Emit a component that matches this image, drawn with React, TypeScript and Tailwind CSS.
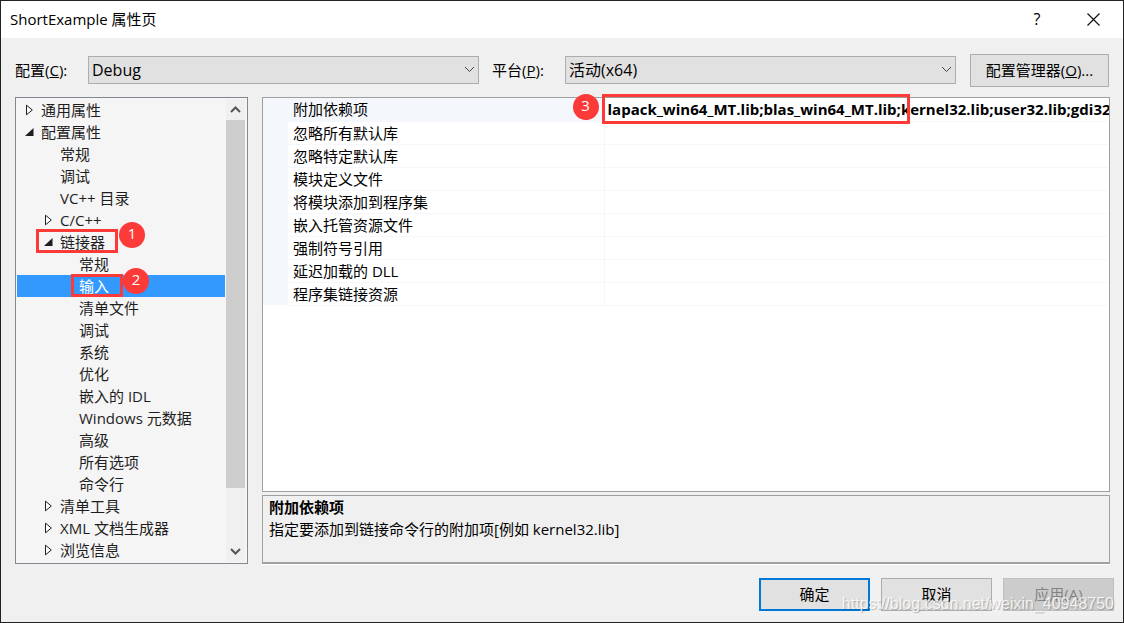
import { useState } from 'react';
import type { ReactNode } from 'react';
import clsx from 'clsx';

type TreeItem = {
  id: string;
  label: string;
  level: 0 | 1 | 2;
  open?: boolean;
};

const TREE: TreeItem[] = [
  { id: 'common', label: '通用属性', level: 0, open: false },
  { id: 'config', label: '配置属性', level: 0, open: true },
  { id: 'general', label: '常规', level: 1 },
  { id: 'debugging', label: '调试', level: 1 },
  { id: 'vc-dirs', label: 'VC++ 目录', level: 1 },
  { id: 'cpp', label: 'C/C++', level: 1, open: false },
  { id: 'linker', label: '链接器', level: 1, open: true },
  { id: 'linker-general', label: '常规', level: 2 },
  { id: 'linker-input', label: '输入', level: 2 },
  { id: 'linker-manifest', label: '清单文件', level: 2 },
  { id: 'linker-debug', label: '调试', level: 2 },
  { id: 'linker-system', label: '系统', level: 2 },
  { id: 'linker-optimize', label: '优化', level: 2 },
  { id: 'linker-idl', label: '嵌入的 IDL', level: 2 },
  { id: 'linker-winmd', label: 'Windows 元数据', level: 2 },
  { id: 'linker-advanced', label: '高级', level: 2 },
  { id: 'linker-all', label: '所有选项', level: 2 },
  { id: 'linker-cmd', label: '命令行', level: 2 },
  { id: 'manifest-tool', label: '清单工具', level: 1, open: false },
  { id: 'xml-doc', label: 'XML 文档生成器', level: 1, open: false },
  { id: 'browse-info', label: '浏览信息', level: 1, open: false },
];

const INDENT = ['pl-2', 'pl-[27px]', 'pl-[46px]'];

const PROPERTIES = [
  { name: '附加依赖项', value: 'lapack_win64_MT.lib;blas_win64_MT.lib;kernel32.lib;user32.lib;gdi32' },
  { name: '忽略所有默认库', value: '' },
  { name: '忽略特定默认库', value: '' },
  { name: '模块定义文件', value: '' },
  { name: '将模块添加到程序集', value: '' },
  { name: '嵌入托管资源文件', value: '' },
  { name: '强制符号引用', value: '' },
  { name: '延迟加载的 DLL', value: '' },
  { name: '程序集链接资源', value: '' },
];

function Expander({ open }: { open?: boolean }) {
  return (
    <svg width="9" height="12" viewBox="0 0 9 12" className="shrink-0" aria-hidden="true">
      {open === true && <path d="M8.5 2v8H0z" fill="#1e1e1e" />}
      {open === false && <path d="M1.5 1.2v9.6L7.3 6z" fill="#fff" stroke="#1e1e1e" />}
    </svg>
  );
}

function Chevron({ up = false, bold = false }: { up?: boolean; bold?: boolean }) {
  return (
    <svg width="11" height="7" viewBox="0 0 11 7" fill="none" aria-hidden="true">
      <path
        d={up ? 'M1 6 5.5 1.5 10 6' : 'M1 1 5.5 5.5 10 1'}
        stroke={bold ? '#555' : '#444'}
        strokeWidth={bold ? 2 : 1}
      />
    </svg>
  );
}

/** Red numbered callout, placed over the dialog by its parent. */
function Badge({ n, className }: { n: number; className: string }) {
  return (
    <span
      className={clsx(
        'pointer-events-none absolute z-10 grid size-[26px] place-items-center rounded-full bg-[#fc3a38] pb-1 text-[15px] font-normal text-white',
        className,
      )}
    >
      {n}
    </span>
  );
}

function Outline({ className }: { className: string }) {
  return <span className={clsx('pointer-events-none absolute z-10 border-3 border-[#fc3a38]', className)} />;
}

function Combo({ id, label, options }: { id: string; label: ReactNode; options: string[] }) {
  return (
    <div className="flex flex-1 items-center">
      <label htmlFor={id} className="w-[73px] shrink-0 whitespace-nowrap">
        {label}
      </label>
      <div className="relative min-w-0 flex-1">
        <select
          id={id}
          className="block h-7 w-full appearance-none border border-[#adadad] bg-[#e1e1e1] pl-[3px] pr-7 text-base leading-5"
        >
          {options.map((o) => (
            <option key={o}>{o}</option>
          ))}
        </select>
        <span className="pointer-events-none absolute inset-y-0 right-1 flex items-center">
          <Chevron />
        </span>
      </div>
    </div>
  );
}

function Tree({ selected, onSelect }: { selected: string; onSelect: (id: string) => void }) {
  return (
    <nav className="flex w-[233px] shrink-0 border border-[#828790] bg-[#f5f5f5] p-px">
      <ul className="min-w-0 flex-1">
        {TREE.map((item) => (
          <li key={item.id} className="relative">
            <button
              type="button"
              onClick={() => onSelect(item.id)}
              className={clsx(
                'flex h-[22px] w-full items-center gap-[7px] whitespace-nowrap text-left',
                INDENT[item.level],
                item.id === selected ? 'bg-[#3399ff] text-white' : 'text-[#1e1e1e]',
              )}
            >
              <Expander open={item.open} />
              {item.label}
            </button>
            {item.id === 'linker' && (
              <>
                <Outline className="-top-0.5 left-[19px] h-6 w-[82px]" />
                <Badge n={1} className="-top-[9px] left-[102px]" />
              </>
            )}
            {item.id === 'linker-input' && (
              <>
                <Outline className="-top-px left-[54px] h-[23px] w-[52px]" />
                <Badge n={2} className="-top-[7px] left-[106px]" />
              </>
            )}
          </li>
        ))}
      </ul>
      <div className="mx-px flex w-[19px] flex-col bg-[#f0f0f0]">
        <button type="button" aria-label="向上滚动" className="grid h-[21px] place-items-center">
          <Chevron up bold />
        </button>
        <div className="flex-1">
          <div className="h-[87.5%] bg-[#cdcdcd]" />
        </div>
        <button type="button" aria-label="向下滚动" className="grid h-[21px] place-items-center">
          <Chevron bold />
        </button>
      </div>
    </nav>
  );
}

function PropertyGrid() {
  return (
    <div className="flex-1 border border-[#a0a0a0] bg-white">
      <table className="w-full table-fixed border-collapse">
        <tbody>
          {PROPERTIES.map((p, i) => (
            <tr key={p.name} className="h-[23px]">
              <td className="w-[25px] bg-[#f4f7fc] p-0" />
              <th
                scope="row"
                className={clsx(
                  'w-[316px] border-b border-r border-[#f4f7fc] p-0 pl-[5px] text-left font-normal',
                  i === 0 && 'bg-[#f4f7fc]',
                )}
              >
                {p.name}
              </th>
              <td className="relative border-b border-[#f4f7fc] p-0 pl-[3px]">
                <div className="overflow-hidden whitespace-nowrap font-bold">{p.value}</div>
                {i === 0 && (
                  <>
                    <Badge n={3} className="-left-8 -top-1" />
                    <Outline className="-left-[3px] -top-1 h-[30px] w-[308px]" />
                  </>
                )}
              </td>
            </tr>
          ))}
        </tbody>
      </table>
    </div>
  );
}

export default function App() {
  const [selected, setSelected] = useState('linker-input');

  return (
    <div className="relative flex min-h-screen flex-col border border-[#222] bg-[#f0f0f0] font-['Open_Sans','Noto_Sans_CJK_SC',sans-serif] text-[15px] leading-[22px] text-black">
      <header className="flex h-[37px] items-center justify-between bg-white pl-[9px] pr-[18px]">
        <h1 className="pb-0.5">ShortExample 属性页</h1>
        <div className="flex items-center gap-9">
          <button type="button" aria-label="帮助" className="w-4 pb-0.5 text-center text-base">
            ?
          </button>
          <button type="button" aria-label="关闭" className="grid size-6 place-items-center">
            <svg width="13" height="13" viewBox="0 0 13 13" stroke="#111" strokeWidth="1.2" aria-hidden="true">
              <path d="M.5.5l12 12M12.5.5l-12 12" />
            </svg>
          </button>
        </div>
      </header>

      <div className="flex items-center gap-3.5 px-3.5 pb-2.5 pt-4">
        <div className="flex flex-1 gap-[13px] pb-0.5">
          <Combo
            id="configuration"
            label={
              <>
                配置(<u>C</u>):
              </>
            }
            options={['Debug']}
          />
          <Combo
            id="platform"
            label={
              <>
                平台(<u>P</u>):
              </>
            }
            options={['活动(x64)']}
          />
        </div>
        <button type="button" className="h-[33px] w-[139px] border border-[#adadad] bg-[#e1e1e1] pb-0.5">
          配置管理器(<u>O</u>)...
        </button>
      </div>

      <main className="flex flex-1 gap-3.5 pl-3.5 pr-[13px]">
        <Tree selected={selected} onSelect={setSelected} />
        <div className="flex min-w-0 flex-1 flex-col gap-[3px]">
          <PropertyGrid />
          <section className="h-[69px] border border-b-2 border-[#a0a0a0] px-1.5 shadow-[0_1px_0_#fff]">
            <h2 className="font-bold">附加依赖项</h2>
            <p>指定要添加到链接命令行的附加项[例如 kernel32.lib]</p>
          </section>
        </div>
      </main>

      <footer className="flex justify-end gap-[11px] pb-[11px] pr-[9px] pt-3.5">
        <button type="button" className="h-[33px] w-[111px] border-2 border-[#0078d7] bg-[#e1e1e1] pb-0.5">
          确定
        </button>
        <button type="button" className="h-[33px] w-[111px] border border-[#adadad] bg-[#e1e1e1] pb-0.5">
          取消
        </button>
        <button
          type="button"
          disabled
          className="h-[33px] w-[111px] border border-[#bfbfbf] bg-[#ccc] pb-0.5 text-[#838383]"
        >
          应用(A)
        </button>
      </footer>

      <div className="pointer-events-none absolute bottom-1.5 right-[9px] font-['Liberation_Sans',sans-serif] text-base text-white/80 [text-shadow:1px_1px_1px_rgba(0,0,0,0.25)]">
        https://blog.csdn.net/weixin_40948750
      </div>
    </div>
  );
}
